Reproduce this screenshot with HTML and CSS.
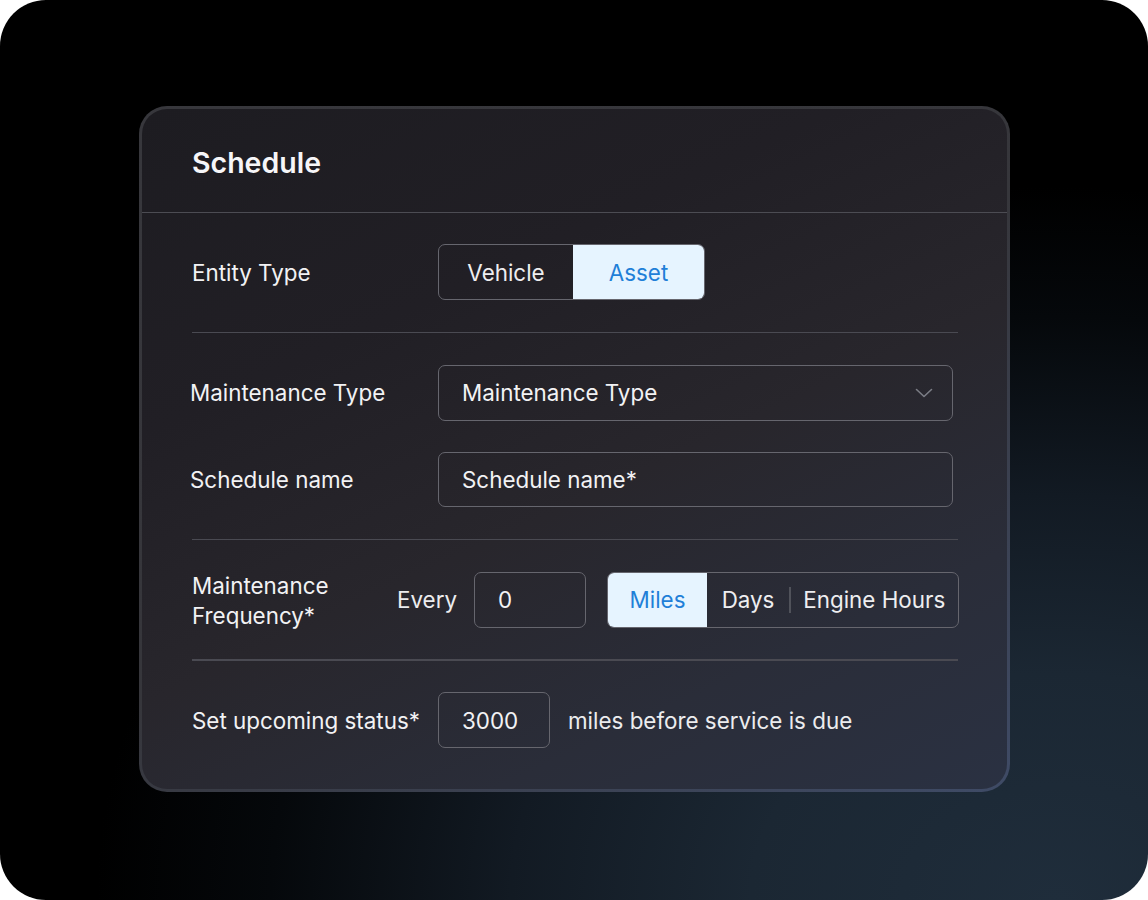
FILE: index.html
```html
<!DOCTYPE html>
<html lang="en">
<head>
<meta charset="utf-8">
<title>Schedule</title>
<link rel="stylesheet" href="styles.css">
</head>
<body>
<div class="frame">
  <section class="card">
    <header class="card-head">
      <h1 class="title">Schedule</h1>
    </header>
    <div class="card-body">
      <div class="row">
        <div class="label">Entity Type</div>
        <div class="seg seg-entity">
          <div class="seg-item seg-vehicle">Vehicle</div>
          <div class="seg-item seg-asset active">Asset</div>
        </div>
      </div>
      <div class="divider"></div>
      <div class="row">
        <div class="label label-shift">Maintenance Type</div>
        <div class="field field-wide select">
          <span>Maintenance Type</span>
          <svg class="chevron" width="18" height="10" viewBox="0 0 18 10" aria-hidden="true"><path d="M1.5 1.5 L9 8.5 L16.5 1.5" fill="none" stroke="#7b7d85" stroke-width="1.6" stroke-linecap="round" stroke-linejoin="round"/></svg>
        </div>
      </div>
      <div class="row row-short">
        <div class="label label-shift">Schedule name</div>
        <div class="field field-wide field-short">Schedule name*</div>
      </div>
      <div class="divider"></div>
      <div class="row">
        <div class="label label-freq">Maintenance<br>Frequency*</div>
        <div class="every">Every</div>
        <div class="field field-num">0</div>
        <div class="seg seg-freq">
          <div class="seg-item seg-miles active">Miles</div>
          <div class="seg-item seg-days">Days</div>
          <div class="seg-sep"></div>
          <div class="seg-item seg-hours">Engine Hours</div>
        </div>
      </div>
      <div class="divider"></div>
      <div class="row">
        <div class="label">Set upcoming status*</div>
        <div class="field field-num">3000</div>
        <div class="after">miles before service is due</div>
      </div>
    </div>
  </section>
</div>
</body>
</html>
```

FILE: styles.css
```css
html, body {
  margin: 0;
  padding: 0;
  background: #ffffff;
}

body {
  width: 1148px;
  height: 900px;
  overflow: hidden;
  font-family: "Inter", "Noto Sans", sans-serif;
  color: #f2f2f4;
}

.frame {
  width: 1148px;
  height: 900px;
  box-sizing: border-box;
  border-radius: 46px;
  background:
    radial-gradient(ellipse 95% 90% at 92% 100%, #1f2d3b 0%, #1b2733 28%, #121a23 50%, #05080b 72%, #000 88%),
    #000;
  padding-top: 106px;
  padding-left: 139px;
}

.card {
  width: 871px;
  height: 686px;
  box-sizing: border-box;
  border-radius: 28px;
  border: 3px solid transparent;
  background:
    linear-gradient(155deg, #1d1c21 0%, #211f25 30%, #28262c 55%, #2a2d39 78%, #2a3142 100%) padding-box,
    linear-gradient(150deg, #37373c 0%, #36363b 50%, #3f4b66 100%) border-box;
  display: flex;
  flex-direction: column;
  overflow: hidden;
}

.card-head {
  height: 104px;
  box-sizing: border-box;
  border-bottom: 1.5px solid #4c4c53;
  display: flex;
  align-items: center;
  padding-left: 50px;
  padding-top: 3px;
}

.title {
  margin: 0;
  font-size: 28.5px;
  font-weight: 600;
  letter-spacing: 0;
  color: #f6f6f8;
}

.card-body {
  padding: 31px 48px 0 50px;
  display: flex;
  flex-direction: column;
  gap: 31.5px;
}

.divider {
  height: 1.5px;
  background: #4a4a52;
  width: 766px;
}

.row {
  display: flex;
  align-items: center;
  height: 56px;
  font-size: 22.4px;
}

.row-short {
  height: 55px;
}

.label {
  width: 246px;
  flex: none;
  color: #f2f2f4;
}

.label-shift {
  margin-left: -2px;
  width: 248px;
}

.label-freq {
  width: 205px;
  line-height: 30px;
  padding-top: 2px;
}

.every {
  flex: none;
  margin-right: 17px;
  color: #ececee;
}

.after {
  flex: none;
  margin-left: 18px;
  color: #ececee;
}

.field {
  flex: none;
  height: 56px;
  box-sizing: border-box;
  border: 1.5px solid #66666e;
  border-radius: 7px;
  display: flex;
  align-items: center;
  padding-left: 23px;
  color: #f2f2f4;
}

.field-wide {
  width: 515px;
}

.field-short {
  height: 55px;
}

.select {
  justify-content: space-between;
  padding-right: 19px;
}

.chevron {
  display: block;
  margin-top: 1px;
}

.field-num {
  width: 112px;
  padding-left: 23px;
}

.seg {
  flex: none;
  display: flex;
  align-items: center;
  height: 56px;
  box-sizing: border-box;
  border: 1.5px solid #66666e;
  border-radius: 7px;
  overflow: hidden;
}

.seg-item {
  height: 100%;
  display: flex;
  align-items: center;
  justify-content: center;
  color: #eeeef0;
  box-sizing: border-box;
}

.seg-item.active {
  background: #e6f4ff;
  color: #1f7fd8;
}

.seg-entity {
  width: 267px;
}

.seg-vehicle {
  width: 134px;
}

.seg-asset {
  flex: 1;
}

.seg-freq {
  width: 352px;
  margin-left: 21px;
}

.seg-miles {
  width: 99px;
}

.seg-days {
  width: 82px;
}

.seg-sep {
  width: 1.5px;
  height: 26px;
  background: #50525a;
  flex: none;
}

.seg-hours {
  flex: 1;
}
```
